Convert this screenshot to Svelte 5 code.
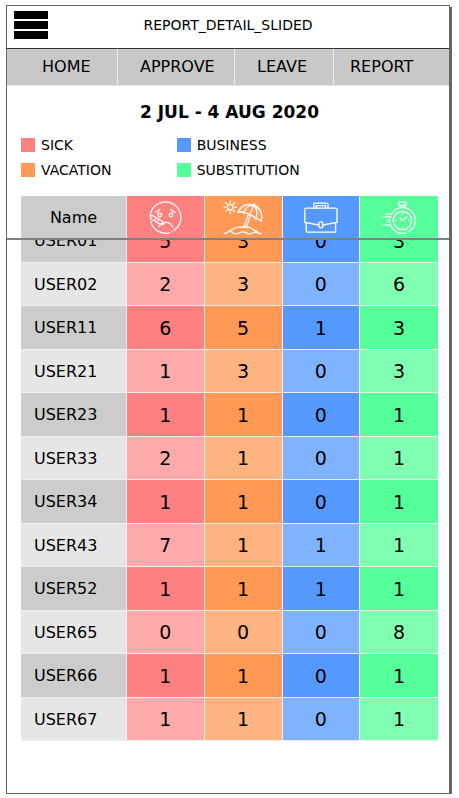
<script>
  const nav = ['Home', 'Approve', 'Leave', 'Report'];
  const kinds = ['sick', 'vacation', 'business', 'substitution'];
  const legend = ['sick', 'business', 'vacation', 'substitution'];
  const rows = [
    ['USER01', 5, 3, 0, 3],
    ['USER02', 2, 3, 0, 6],
    ['USER11', 6, 5, 1, 3],
    ['USER21', 1, 3, 0, 3],
    ['USER23', 1, 1, 0, 1],
    ['USER33', 2, 1, 0, 1],
    ['USER34', 1, 1, 0, 1],
    ['USER43', 7, 1, 1, 1],
    ['USER52', 1, 1, 1, 1],
    ['USER65', 0, 0, 0, 8],
    ['USER66', 1, 1, 0, 1],
    ['USER67', 1, 1, 0, 1]
  ];
</script>

<div class="screen">
  <header>
    <button class="menu" aria-label="Menu"><span></span><span></span><span></span></button>
    <h1>REPORT_DETAIL_SLIDED</h1>
  </header>
  <nav>
    {#each nav as item}
      <a class={item.toLowerCase()} href="#{item.toLowerCase()}">{item.toUpperCase()}</a>
    {/each}
  </nav>
  <main>
    <h2>2 JUL - 4 AUG 2020</h2>
    <ul>
      {#each legend as kind}
        <li><i class={kind}></i>{kind.toUpperCase()}</li>
      {/each}
    </ul>
    <table>
      <thead>
        <tr>
          <th class="name" scope="col">Name</th>
          {#each kinds as kind}
            <th class={kind} scope="col" aria-label={kind}>
              <svg viewBox="0 0 40 40" width="40" height="40" aria-hidden="true">
                {#if kind === 'sick'}
                  <path d="M5.2 17.5a15.4 15.4 0 1 1 24 14.6M5.8 23.6a15.4 15.4 0 0 0 18.7 11.2M26.600 33.800l.5-.3" />
                  <circle cx="14.8" cy="17" r="1.8" /><circle cx="26" cy="17" r="1.8" />
                  <path d="M10.6 14.2q2.8-.3 4.2-2.8M30.2 14.2q-2.8-.3-4.2-2.8" />
                  <path d="M8.8 18.2c-1.5-1.6-4.2 0-3.4 2.2.5 1.5 1.8 2 3 1.6l7.400 4.600 2.800-.3-.8-2.600zM10.600 21.200l1-1.400M13.200 22.600l1-1.400" />
                  <path d="M13.800 28.800c2.800-5.800 11-6.200 14 .2M18.600 25.800l2.400-1.800" />
                {:else if kind === 'vacation'}
                  <circle cx="7.200" cy="9.200" r="2.800" />
                  <path d="M7.2 3v1.6M7.2 13.8v1.6M1 9.2h1.6M11.8 9.2h1.6M2.8 4.800l1.200 1.200M10.400 12.400l1.200 1.200M11.600 4.800l-1.200 1.200M4 12.400l-1.200 1.200" />
                  <path d="M14.800 14.400C18 7.600 24.800 4.800 31 7.200s9 9 7.200 16.200c-1.600-2.200-3.400-3-5.600-2.400-1.400-2.600-3.400-4-6.200-4-2-2.200-4-2.800-6-2.200-1.400-1.400-3.200-1.400-5.600-.4z" />
                  <path d="M20.400 14.800C22.400 9.800 26 6.800 31 7.200M32.600 21c2-5.400 1.400-10.200-1.600-13.800l-4.600 9.800M31 7.200l.6-1.200M25.200 17l-4.600 12.400M27.600 17.400L23.200 29.600" />
                  <path d="M6.200 32.600c3-.4 5-3.400 10-3.400h8.400c4.600 0 6 3.800 9.800 4.200M1.200 35.400c3.200 0 3.600-2 6-2s3 2.400 6 2.400 3.600-2 6.600-2 3.600 2.200 6.600 2.200 3.200-1.800 5.800-1.800 3 1.400 6.200 1.200" />
                {:else if kind === 'business'}
                  <path d="M12.800 10.200V6.400q0-1.200 1.200-1.200h11.800q1.200 0 1.200 1.200v3.800M15.200 10.200V7.600h9.400v2.600" />
                  <path d="M5 10.200h29.800q1.200 0 1.200 1.200v13L21.800 27M17.800 27L3.800 24.400v-13q0-1.200 1.200-1.200M5.200 24.800V33q0 1.200 1.200 1.200h27q1.200 0 1.200-1.200v-8.200" />
                  <rect x="17.800" y="23.800" width="4" height="6" rx="2" />
                {:else}
                  <path d="M12.400 16.200a12.800 12.800 0 1 1 17.400 17.400M11.600 27.200a12.800 12.800 0 0 0 15.600 7.600M32.400 31.400l.4-.4" />
                  <circle cx="23.500" cy="22.500" r="9.200" />
                  <rect x="19.600" y="4.200" width="7.800" height="3.200" rx="1" />
                  <path d="M21.400 7.400v2.400M25.600 7.400v2.400M20.400 19.600l3.100 3.100 4.400-4M23.500 15.500v.5M23.500 29v.5M16.500 22.500h.5M30 22.500h.5" />
                  <path d="M7 16.200h5.600M3.200 18.900h.6M6 18.900h6M8.400 21.600h2.800M8.400 24.200h2.800M3.200 26.900h.6M6 26.900h5.400" />
                {/if}
              </svg>
            </th>
          {/each}
        </tr>
      </thead>
      <tbody>
        {#each rows as [name, ...days]}
          <tr>
            <th class="name" scope="row"><div>{name}</div></th>
            {#each days as day, i}
              <td class={kinds[i]}><div>{day}</div></td>
            {/each}
          </tr>
        {/each}
      </tbody>
    </table>
  </main>
</div>

<style>
  :global(body) {
    background: #fff;
  }
  .screen {
    box-sizing: border-box;
    min-height: 789px;
    margin: 5px 9px 0 6px;
    border: 1px solid #666;
    box-shadow: 2px 2px 0 #666;
    background: #fff;
    color: #000;
    font-family: Verdana, "DejaVu Sans", sans-serif;
  }
  header {
    display: grid;
    grid-template-columns: 1fr auto 1fr;
    align-items: start;
    height: 42px;
    border-bottom: 1px solid #333;
  }
  .menu {
    display: grid;
    gap: 2px;
    width: 34px;
    margin: 5px 0 0 7px;
    padding: 0;
    border: 0;
    background: none;
  }
  .menu span {
    height: 8px;
    background: #000;
  }
  h1 {
    margin: 10px 0 0;
    font-size: 14px;
    line-height: 18px;
    font-weight: 400;
  }
  nav {
    display: grid;
    grid-template-columns: 111fr 117fr 99fr 115fr;
    background: #c8c8c8;
    border-bottom: 1px solid #e6e6e6;
  }
  nav a {
    box-sizing: border-box;
    padding-left: 22px;
    border-right: 1px solid #eee;
    color: #000;
    font-size: 16px;
    line-height: 36px;
    text-decoration: none;
  }
  nav .home {
    padding-left: 35px;
  }
  nav .report {
    padding-left: 16px;
    border-right: 0;
  }
  main {
    padding: 14px 11px 0 14px;
  }
  h2 {
    margin: 0;
    font-size: 17px;
    line-height: 24px;
    text-align: center;
  }
  ul {
    display: grid;
    grid-template-columns: 156fr 262fr;
    row-gap: 1px;
    margin: 9px 0 14px;
    padding: 0;
    list-style: none;
  }
  li {
    display: flex;
    align-items: center;
    gap: 6px;
    font-size: 14px;
    line-height: 24px;
  }
  i {
    width: 14px;
    height: 14px;
  }
  .sick { background: #ff8080; }
  .vacation { background: #f95; }
  .business { background: #59f; }
  .substitution { background: #5f9; }
  .name { background: #ccc; }
  tbody tr:nth-child(even) .sick { background: #faa; }
  tbody tr:nth-child(even) .vacation { background: #ffb380; }
  tbody tr:nth-child(even) .business { background: #80b3ff; }
  tbody tr:nth-child(even) .substitution { background: #80ffb3; }
  tbody tr:nth-child(even) .name { background: #e6e6e6; }
  table {
    width: 100%;
    table-layout: fixed;
    border-collapse: separate;
    border-spacing: 0;
  }
  th, td {
    box-sizing: border-box;
    padding: 0;
    border-right: 1px solid #eee;
    font-weight: 400;
    text-align: center;
    vertical-align: middle;
  }
  th:last-child, td:last-child {
    border-right: 0;
  }
  th {
    font-size: 16px;
  }
  td {
    font-size: 19px;
  }
  thead {
    position: relative;
    z-index: 1;
  }
  thead::after {
    content: "";
    position: absolute;
    left: -14px;
    right: -11px;
    bottom: -1px;
    height: 2px;
    background: #808080;
  }
  thead th {
    height: 43px;
  }
  thead .name {
    width: 106px;
  }
  tbody .name {
    padding-left: 13px;
    text-align: left;
  }
  tbody th, tbody td {
    height: 44px;
    border-bottom: 1px solid #eee;
  }
  tbody tr:nth-child(even) > * {
    height: 43px;
  }
  /* The first row is scrolled halfway under the heading. */
  tbody tr:first-child > * {
    height: 24px;
  }
  tbody tr:first-child div {
    margin-top: -19px;
    line-height: 42px;
  }
  svg {
    display: block;
    margin: 0 auto;
    fill: none;
    stroke: #fff;
    stroke-width: 1.3;
    stroke-linecap: round;
    stroke-linejoin: round;
  }
</style>
